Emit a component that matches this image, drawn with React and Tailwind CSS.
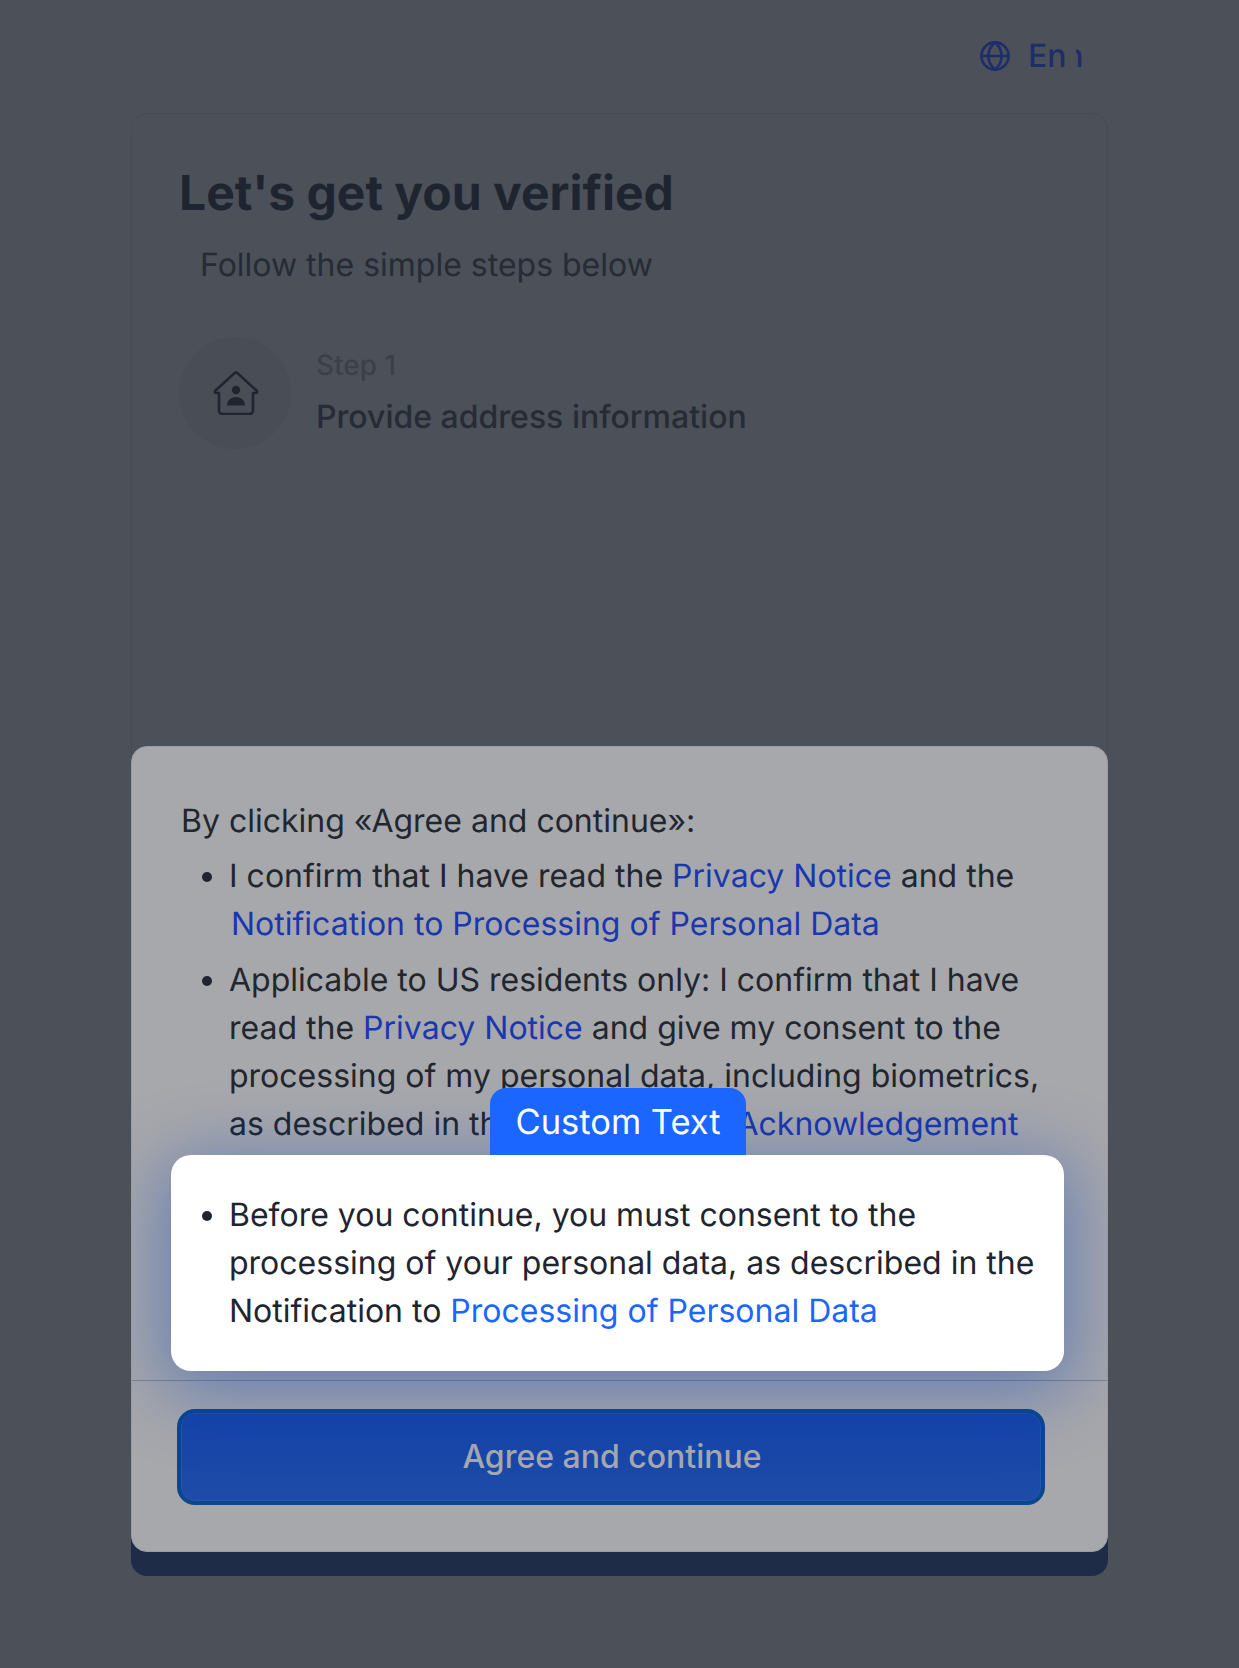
import React from "react";

function Globe() {
  return (
    <svg width="30" height="30" viewBox="0 0 30 30" fill="none" stroke="#1e2d6b" strokeWidth="2.6">
      <circle cx="15" cy="15" r="13.6" />
      <path d="M1.4 15h27.2" />
      <path d="M15 1.4c4.6 3.8 6.6 8.4 6.6 13.6S19.6 24.8 15 28.6C10.4 24.8 8.4 20.2 8.4 15S10.4 5.2 15 1.4z" />
    </svg>
  );
}

function HouseIcon() {
  return (
    <svg width="48" height="44" viewBox="0 0 48 44" fill="none" className="ml-[2px]">
      <path
        d="M7 22v17.500a3.500 3.500 0 0 0 3.500 3.500h27a3.500 3.500 0 0 0 3.500-3.500V22h2.800c1.200 0 1.700-1.300.900-2.200L25.800 2.400a2.600 2.600 0 0 0-3.600 0L3.300 19.800c-.8.900-.3 2.200.9 2.200H7z"
        stroke="#1f2530"
        strokeWidth="2.600"
        strokeLinejoin="round"
      />
      <circle cx="24" cy="19" r="4.200" fill="#1f2530" />
      <path d="M15 34.500c0-5 4-8.500 9-8.500s9 3.500 9 8.500H15z" fill="#1f2530" />
    </svg>
  );
}

function Bullet({ children, className }) {
  return (
    <li className={"relative pl-[48px] " + className}>
      <span className="absolute left-[21px] top-[20px] w-[10px] h-[10px] rounded-full bg-[#1f2530]" />
      {children}
    </li>
  );
}

export default function App() {
  return (
    <div
      className="w-[1239px] h-[1668px] bg-[#4c5058] overflow-hidden flex flex-col items-center text-[32px] leading-[48px] text-[#1f2530] [text-rendering:geometricPrecision]"
      style={{ fontFamily: "Inter, sans-serif" }}
    >
      <header className="w-[977px] h-[113px] pt-[32px] flex items-start">
        <div className="ml-[849px] flex items-center gap-[18px] h-[48px] font-medium text-[#1e2d6b]">
          <Globe />
          <span className="flex items-center">
            <span>En</span>
            <span className="inline-flex justify-end w-[8px] overflow-hidden ml-[9px]">
              <span>n</span>
            </span>
          </span>
        </div>
      </header>

      <main className="relative w-[977px] h-[1463px]">
        <div className="h-[1439px] border border-[#474b53] rounded-[16px] pl-[47px] pt-[51px]">
          <h1 className="text-[48px] leading-[56px] font-bold">Let's get you verified</h1>
          <p className="mt-[20px] ml-[21px] text-[#262b35]">Follow the simple steps below</p>
          <div className="mt-[48px] flex items-start gap-[25px]">
            <div className="w-[112px] h-[112px] rounded-full bg-[#494d55] flex items-center justify-center">
              <HouseIcon />
            </div>
            <div>
              <div className="text-[28px] leading-[40px] mt-[8px] text-[#3c4049] font-medium">Step 1</div>
              <div className="mt-[8px] font-medium text-[#262b35]">Provide address information</div>
            </div>
          </div>
        </div>

        <div className="absolute left-0 right-0 bottom-0 h-[60px] bg-[#1f2c48] rounded-b-[16px]" />

        <section className="absolute left-0 right-0 top-[633px] h-[806px] bg-[#a7a8ac] border border-[#9a9ca1] rounded-[16px] overflow-hidden">
          <div className="pl-[49px] pr-[40px] pt-[50px] h-[634px] border-b border-[#7c8394]">
            <p className="text-[#21262f]">By clicking «Agree and continue»:</p>
            <ul className="text-[#21262f]">
              <Bullet className="mt-[7px]">
                I confirm that I have read the <a className="text-[#1b37ad]">Privacy Notice</a> and the{" "}
                <a className="text-[#1b37ad] ml-[2px]">Notification to Processing of Personal Data</a>
              </Bullet>
              <Bullet className="mt-[8px]">
                Applicable to US residents only: I confirm that I have read the{" "}
                <a className="text-[#1b37ad]">Privacy Notice</a> and give my consent to the processing of my personal
                data, including biometrics, as described in the{" "}
                <a className="text-[#1b37ad]">
                  Personal Data <span className="-ml-[9px]">Acknowledgement</span>
                </a>
              </Bullet>
            </ul>
          </div>
          <div className="pl-[45px] pr-[62px] pt-[28px]">
            <button className="w-full h-[96px] rounded-[18px] border-[4px] border-[#0a478c] bg-linear-to-b from-[#1543a8] to-[#1d4ca9] shadow-[inset_0_0_0_1px_rgba(60,110,190,0.3)] text-[#a7a9ae] font-medium pl-[2px]">
              Agree and continue
            </button>
          </div>

          <div className="absolute left-[39px] top-[408px] w-[893px] h-[216px] bg-white rounded-[20px] shadow-[0_14px_70px_10px_rgba(0,60,185,0.38)] pl-[10px] pr-[20px] pt-[36px]">
            <ul className="text-[#1f2530]">
              <Bullet className="">
                Before you continue, you must consent to the processing of your personal data, as described in the
                Notification to <a className="text-[#1a66ff]">Processing of Personal Data</a>
              </Bullet>
            </ul>
          </div>
          <div className="absolute left-[358px] top-[341px] h-[67px] w-[256px] pt-[11px] text-center bg-[#1a66ff] rounded-t-[16px] text-white text-[34.5px]">
            Custom Text
          </div>
        </section>
      </main>
    </div>
  );
}
